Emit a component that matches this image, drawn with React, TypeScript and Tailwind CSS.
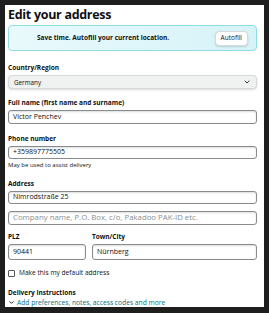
import { ChevronDown } from 'lucide-react';

function Label({ children, className = '' }: { children: React.ReactNode; className?: string }) {
  return <p className={`text-[6.5px] font-bold text-[#0f1111] leading-[9px] ${className}`}>{children}</p>;
}

function Field({ value, placeholder, className = '' }: { value?: string; placeholder?: string; className?: string }) {
  return (
    <div
      className={`h-[16px] border border-[#888c8c] rounded-[3px] bg-white flex items-center px-[4px] shadow-[inset_0_1px_2px_rgba(15,17,17,0.15)] ${className}`}
    >
      {value ? (
        <span className="text-[7px] text-[#0f1111]">{value}</span>
      ) : (
        <span className="text-[7.8px] text-[#8a8f8f]">{placeholder}</span>
      )}
    </div>
  );
}

export default function App() {
  return (
    <div className="w-[269px] h-[313px] bg-[#1e1e1e] pt-[5px] pb-[6px] px-[5px]" style={{ fontFamily: '"Open Sans", sans-serif' }}>
      <div className="h-full bg-white pl-[3px] pr-[7px] flex flex-col">
        <h1 className="text-[12.5px] font-bold text-[#0f1111] leading-[18px] mt-[1px] tracking-[-0.3px] whitespace-nowrap">
          Edit your address
        </h1>

        <div className="mt-[1px] h-[32px] rounded-[4px] border border-[#8fdde8] bg-gradient-to-r from-[#e9f9fc] to-[#d6f3f8] flex items-center justify-between pl-[28px] pr-[8px]">
          <span className="text-[6.5px] font-bold text-[#0f1111]">Save time. Autofill your current location.</span>
          <button className="h-[15px] px-[5px] bg-white rounded-[4px] border border-[#d5d9d9] text-[6.5px] text-[#0f1111] shadow-[0_1px_2px_rgba(15,17,17,0.15)]">
            Autofill
          </button>
        </div>

        <Label className="mt-[12px]">Country/Region</Label>
        <div className="mt-[3px] h-[17px] rounded-[4px] bg-[#f0f2f2] border border-[#d5d9d9] shadow-[0_1px_2px_rgba(15,17,17,0.15)] flex items-center justify-between pl-[5px] pr-[5px] text-[6.3px] text-[#0f1111]">
          <span>Germany</span>
          <ChevronDown size={8} strokeWidth={2.5} />
        </div>

        <Label className="mt-[9px]">Full name (first name and surname)</Label>
        <Field className="mt-[3px]" value="Victor Penchev" />

        <Label className="mt-[10px]">Phone number</Label>
        <Field className="mt-[3px]" value="+359897775505" />
        <p className="mt-[2px] text-[6px] text-[#0f1111] leading-[9px]">May be used to assist delivery</p>

        <Label className="mt-[9px]">Address</Label>
        <Field className="mt-[3px]" value="Nimrodstraße 25" />
        <Field className="mt-[7px]" placeholder="Company name, P.O. Box, c/o, Pakadoo PAK-ID etc." />

        <div className="mt-[7px] flex gap-[6px]">
          <div className="w-[78px] flex flex-col">
            <Label>PLZ</Label>
            <Field className="mt-[3px]" value="90441" />
          </div>
          <div className="flex-1 flex flex-col">
            <Label>Town/City</Label>
            <Field className="mt-[3px]" value="Nürnberg" />
          </div>
        </div>

        <label className="mt-[8px] flex items-center gap-[4px] text-[6.6px] text-[#0f1111]">
          <span className="w-[7px] h-[7px] border border-[#555] rounded-[1px] bg-white" />
          Make this my default address
        </label>

        <Label className="mt-[10px]">Delivery instructions</Label>
        <div className="mt-[1px] flex items-center gap-[2px] text-[6.7px] text-[#007185] leading-[9px]">
          <ChevronDown size={7} strokeWidth={3} className="text-[#0f1111]" />
          <span>Add preferences, notes, access codes and more</span>
        </div>
      </div>
    </div>
  );
}
